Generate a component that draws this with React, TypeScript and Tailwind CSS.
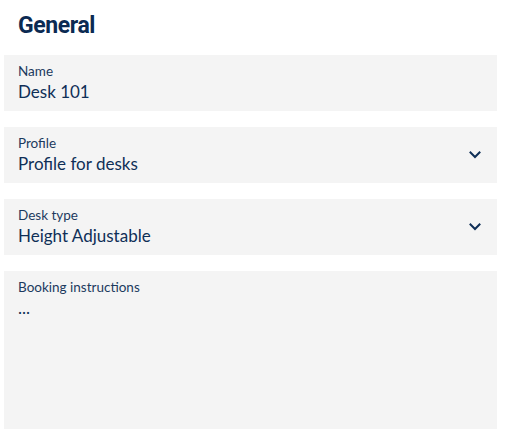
import React from "react";

const Chevron = () => (
  <svg width="12" height="8" viewBox="0 0 12 8" className="shrink-0 self-center">
    <path d="M1.5 1.5 L6 6 L10.5 1.5" fill="none" stroke="#0f2f57" strokeWidth="2" strokeLinecap="square" />
  </svg>
);

const Field = ({ label, value, select }: { label: string; value: string; select?: boolean }) => (
  <div className="h-[56px] bg-[#f4f4f4] flex pl-[14px] pr-[16px]">
    <div className="flex-1 flex flex-col pt-[9px]">
      <span className="text-[13.5px] leading-[15px] text-[#1c3a5e]">{label}</span>
      <span className="text-[17px] leading-[26px] text-[#0f2f57]">{value}</span>
    </div>
    {select && <Chevron />}
  </div>
);

export default function App() {
  return (
    <div className="w-[510px] h-[442px] bg-white pl-[4px] pr-[13px]" style={{ fontFamily: "Lato, 'Open Sans', sans-serif" }}>
      <h1 className="pl-[14px] pt-[11px] h-[55px] text-[23px] leading-[29px] font-bold text-[#0b2a52] tracking-[-0.4px]" style={{ fontFamily: "Roboto, sans-serif" }}>General</h1>
      <div className="flex flex-col gap-[16px]">
        <Field label="Name" value="Desk 101" />
        <Field label="Profile" value="Profile for desks" select />
        <Field label="Desk type" value="Height Adjustable" select />
        <div className="h-[158px] bg-[#f4f4f4] pl-[14px] pt-[9px] flex flex-col">
          <span className="text-[13.5px] leading-[15px] text-[#1c3a5e]">Booking instructions</span>
          <span className="text-[17px] leading-[26px] text-[#0f2f57]">...</span>
        </div>
      </div>
    </div>
  );
}
